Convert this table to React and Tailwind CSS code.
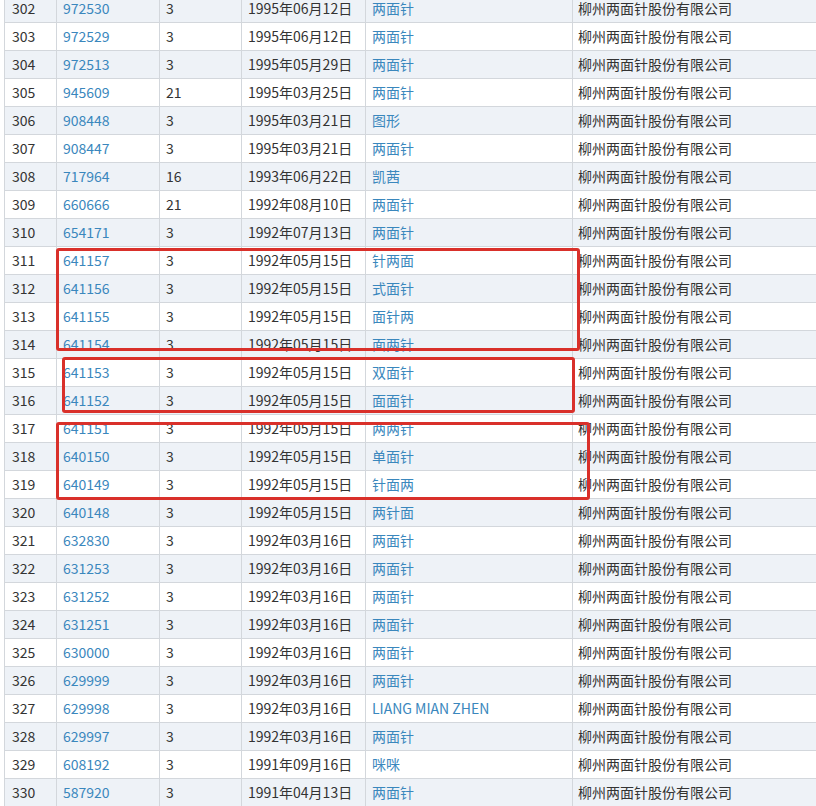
import React from "react";

const rows = [
  ["302", "972530", "3", "1995年06月12日", "两面针"],
  ["303", "972529", "3", "1995年06月12日", "两面针"],
  ["304", "972513", "3", "1995年05月29日", "两面针"],
  ["305", "945609", "21", "1995年03月25日", "两面针"],
  ["306", "908448", "3", "1995年03月21日", "图形"],
  ["307", "908447", "3", "1995年03月21日", "两面针"],
  ["308", "717964", "16", "1993年06月22日", "凯茜"],
  ["309", "660666", "21", "1992年08月10日", "两面针"],
  ["310", "654171", "3", "1992年07月13日", "两面针"],
  ["311", "641157", "3", "1992年05月15日", "针两面"],
  ["312", "641156", "3", "1992年05月15日", "式面针"],
  ["313", "641155", "3", "1992年05月15日", "面针两"],
  ["314", "641154", "3", "1992年05月15日", "面两针"],
  ["315", "641153", "3", "1992年05月15日", "双面针"],
  ["316", "641152", "3", "1992年05月15日", "面面针"],
  ["317", "641151", "3", "1992年05月15日", "两两针"],
  ["318", "640150", "3", "1992年05月15日", "单面针"],
  ["319", "640149", "3", "1992年05月15日", "针面两"],
  ["320", "640148", "3", "1992年05月15日", "两针面"],
  ["321", "632830", "3", "1992年03月16日", "两面针"],
  ["322", "631253", "3", "1992年03月16日", "两面针"],
  ["323", "631252", "3", "1992年03月16日", "两面针"],
  ["324", "631251", "3", "1992年03月16日", "两面针"],
  ["325", "630000", "3", "1992年03月16日", "两面针"],
  ["326", "629999", "3", "1992年03月16日", "两面针"],
  ["327", "629998", "3", "1992年03月16日", "LIANG MIAN ZHEN"],
  ["328", "629997", "3", "1992年03月16日", "两面针"],
  ["329", "608192", "3", "1991年09月16日", "咪咪"],
  ["330", "587920", "3", "1991年04月13日", "两面针"],
];

const cell = "border-l border-[#d3d7dc] flex items-center px-[6px] whitespace-nowrap overflow-hidden";

export default function App() {
  return (
    <div
      className="relative w-[816px] h-[806px] overflow-hidden bg-white text-[14px] text-[#333]"
      style={{ fontFamily: '"Noto Sans CJK SC", "Noto Sans", sans-serif' }}
    >
      <div className="ml-[4px] -mt-[5px]">
        {rows.map((r, i) => (
          <div
            key={r[0]}
            className={
              "grid grid-cols-[52px_103px_82px_124px_207px_1fr] h-[28px] border-b border-[#d3d7dc] " +
              (i % 2 === 0 ? "bg-[#eef2f7]" : "bg-white")
            }
          >
            <div className={cell + " pl-[7px]"}>{r[0]}</div>
            <div className={cell + " text-[#3a87bd]"}>{r[1]}</div>
            <div className={cell}>{r[2]}</div>
            <div className={cell}>{r[3]}</div>
            <div className={cell + " text-[#3a87bd]"}>{r[4]}</div>
            <div className={cell + " pl-[5px]"}>柳州两面针股份有限公司</div>
          </div>
        ))}
      </div>

      <div className="absolute left-[56px] top-[248px] w-[524px] h-[103px] border-[3px] border-[#d9302a] rounded-[3px]" />
      <div className="absolute left-[62px] top-[357px] w-[513px] h-[56px] border-[3px] border-[#d9302a] rounded-[3px]" />
      <div className="absolute left-[56px] top-[422px] w-[534px] h-[78px] border-[3px] border-[#d9302a] rounded-[3px]" />
    </div>
  );
}
